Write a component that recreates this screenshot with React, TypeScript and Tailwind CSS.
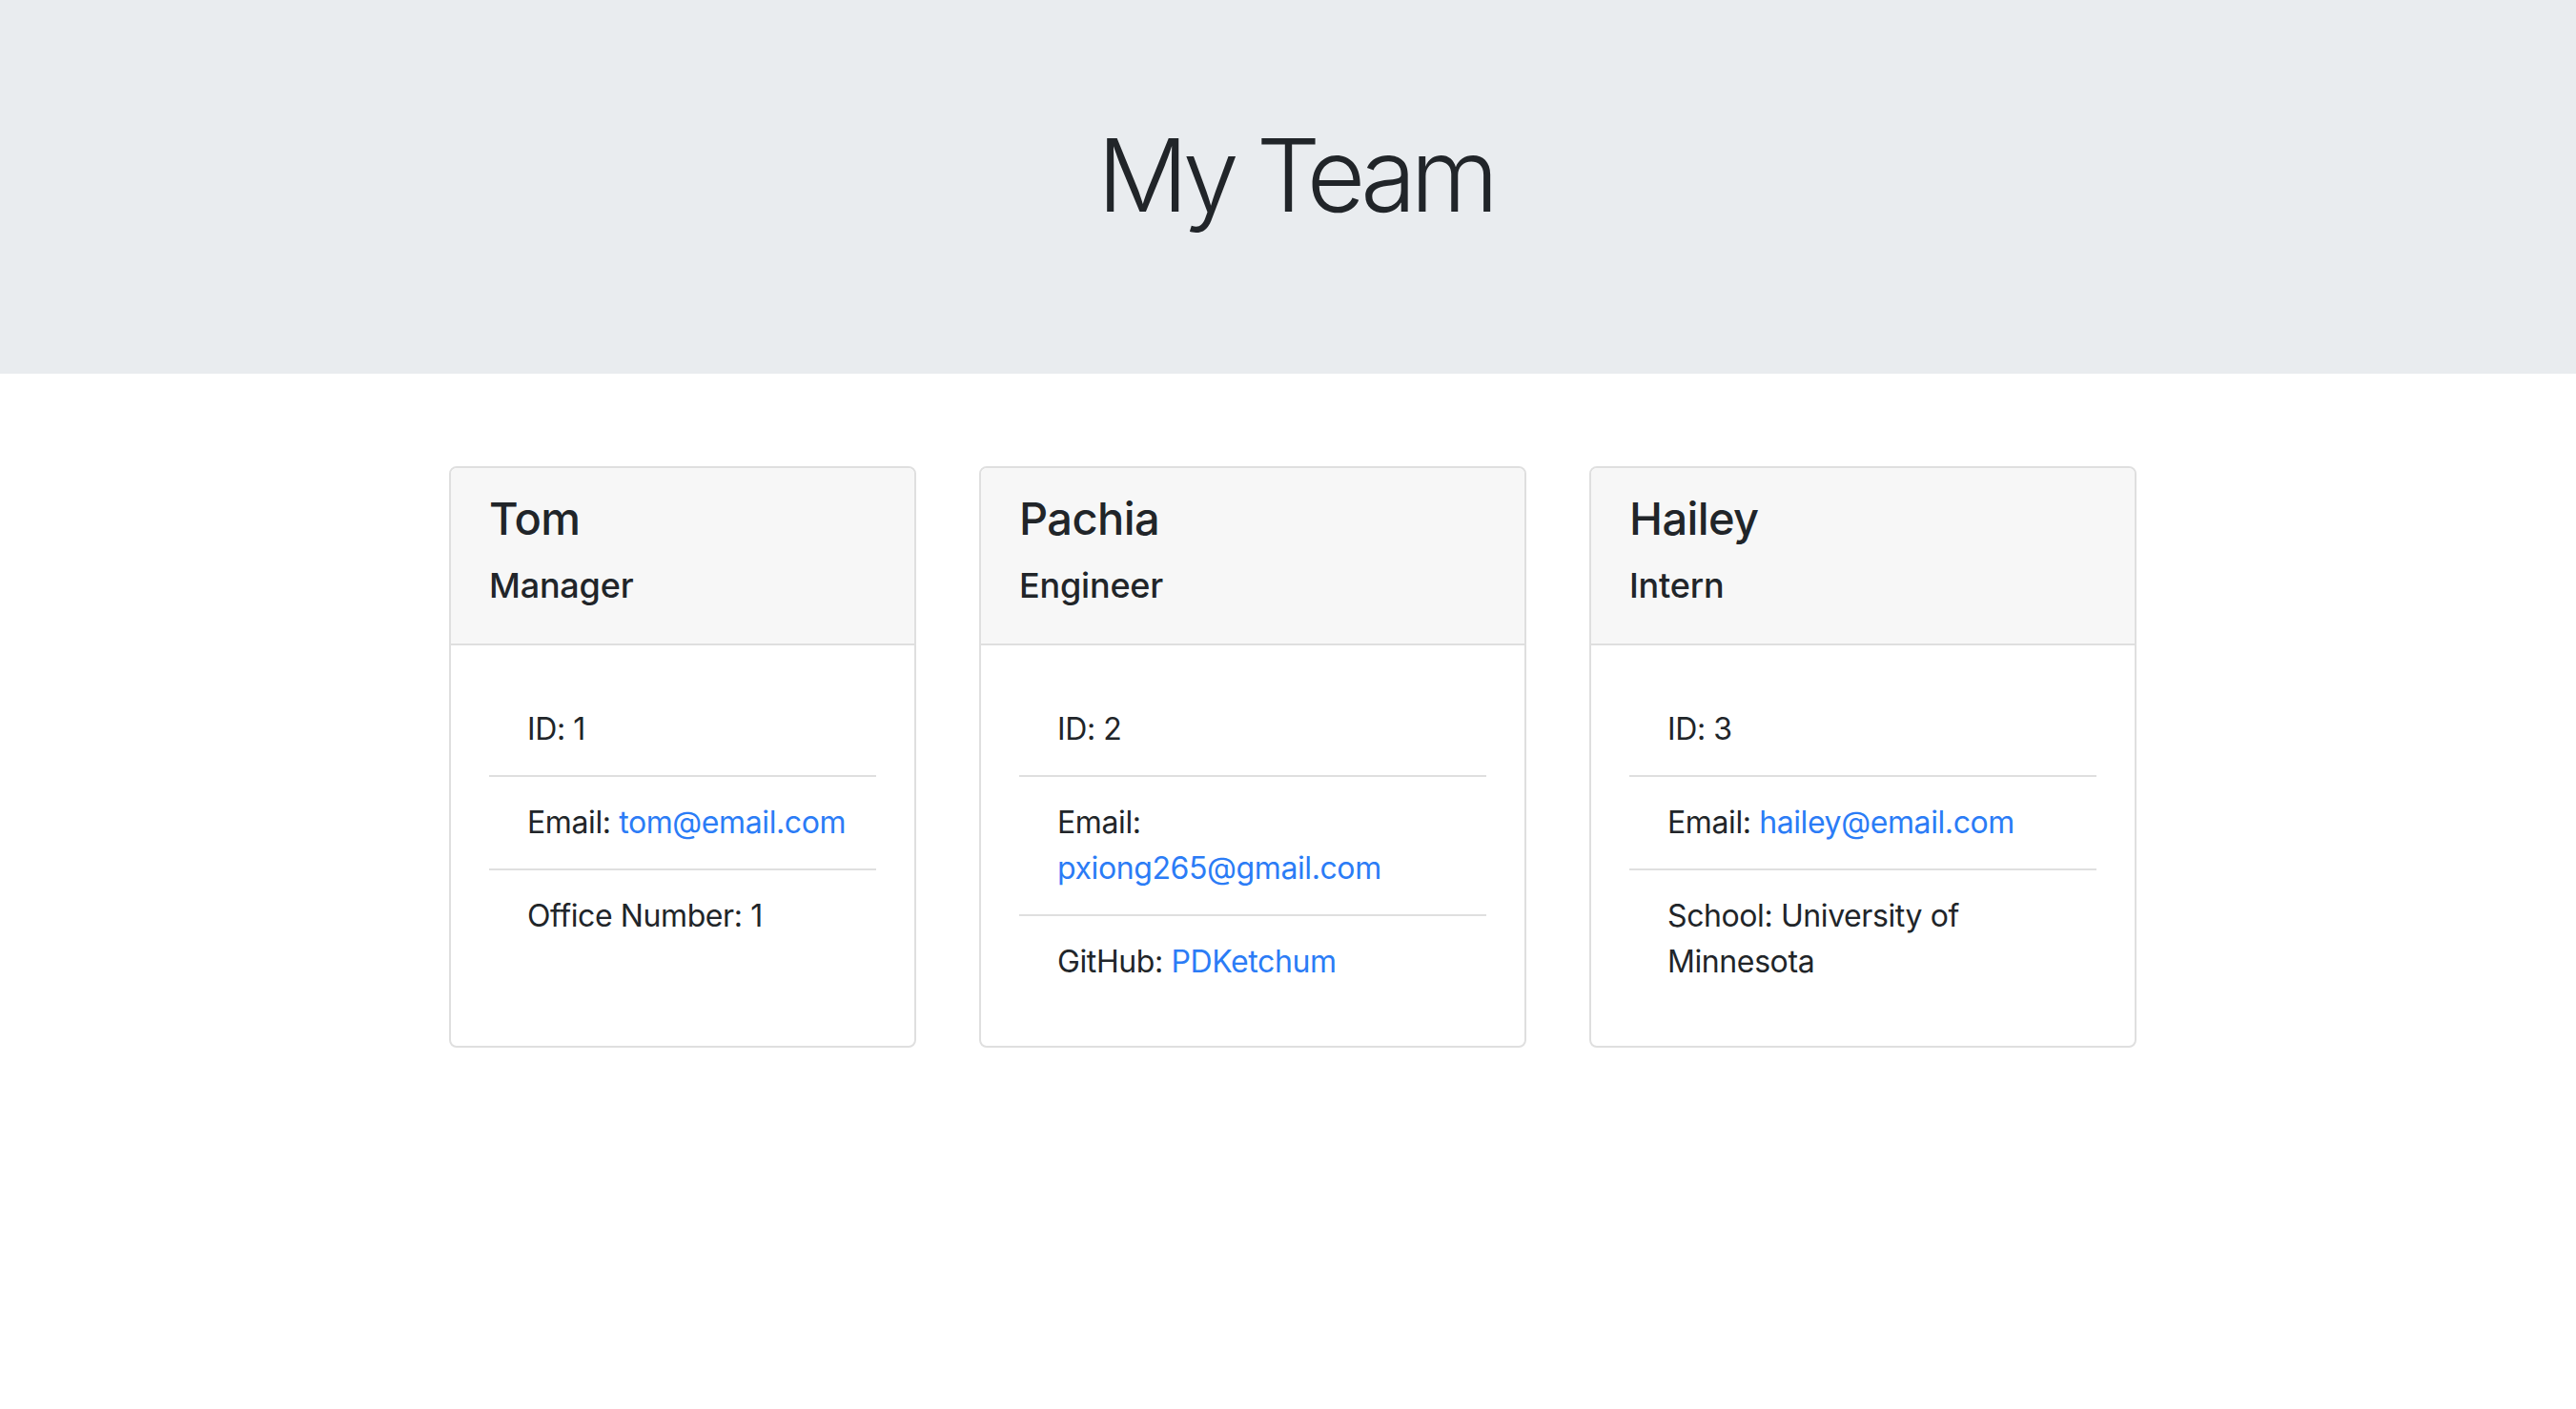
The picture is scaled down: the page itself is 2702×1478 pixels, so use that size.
import React from "react";

type Row = { label: string; value: React.ReactNode; link?: boolean; breakAfterLabel?: boolean };

function Card({ name, role, width, rows }: { name: string; role: string; width: string; rows: Row[] }) {
  return (
    <div className={`${width} flex flex-col rounded-[8px] border-2 border-[#dfdfdf] bg-white`}>
      <div className="rounded-t-[6px] border-b-2 border-[#dfdfdf] bg-[#f7f7f7] px-[40px] pt-[24px] pb-[24px]">
        <div className="text-[47px] leading-[58px] font-medium tracking-[-0.6px] text-[#212529] mb-[20px]">{name}</div>
        <div className="text-[36px] leading-[43px] font-medium tracking-[-0.2px] text-[#212529] mb-[15px]">{role}</div>
      </div>
      <div className="flex-1 p-[40px]">
        <ul className="flex flex-col">
          {rows.map((r, i) => (
            <li
              key={i}
              className={`whitespace-nowrap px-[40px] py-[24px] text-[32px] leading-[48px] tracking-[-0.4px] text-[#212529] ${
                i < rows.length - 1 ? "border-b-2 border-[#dfdfdf]" : ""
              }`}
            >
              {r.label}
              {r.breakAfterLabel ? <br /> : " "}
              {r.link ? <a className="text-[#2b7cf6]">{r.value}</a> : r.value}
            </li>
          ))}
        </ul>
      </div>
    </div>
  );
}

export default function App() {
  return (
    <div className="min-h-[1478px] bg-white font-['Inter','Noto_Sans',sans-serif] text-[#212529]">
      <header className="h-[392px] bg-[#e9ecef] pt-[131px] pl-[15px] text-center">
        <h1 className="text-[106px] leading-[106px] font-light tracking-[-6px] text-[#212529]">My Team</h1>
      </header>
      <main className="mt-[97px] flex items-stretch justify-center gap-[66px] pl-[10px]">
        <Card
          name="Tom"
          role="Manager"
          width="w-[490px]"
          rows={[
            { label: "ID: 1", value: "" },
            { label: "Email:", value: "tom@email.com", link: true },
            { label: "Office Number: 1", value: "" },
          ]}
        />
        <Card
          name="Pachia"
          role="Engineer"
          width="w-[574px]"
          rows={[
            { label: "ID: 2", value: "" },
            { label: "Email:", value: "pxiong265@gmail.com", link: true, breakAfterLabel: true },
            { label: "GitHub:", value: "PDKetchum", link: true },
          ]}
        />
        <Card
          name="Hailey"
          role="Intern"
          width="w-[574px]"
          rows={[
            { label: "ID: 3", value: "" },
            { label: "Email:", value: "hailey@email.com", link: true },
            { label: "School: University of", value: "Minnesota", breakAfterLabel: true },
          ]}
        />
      </main>
    </div>
  );
}
